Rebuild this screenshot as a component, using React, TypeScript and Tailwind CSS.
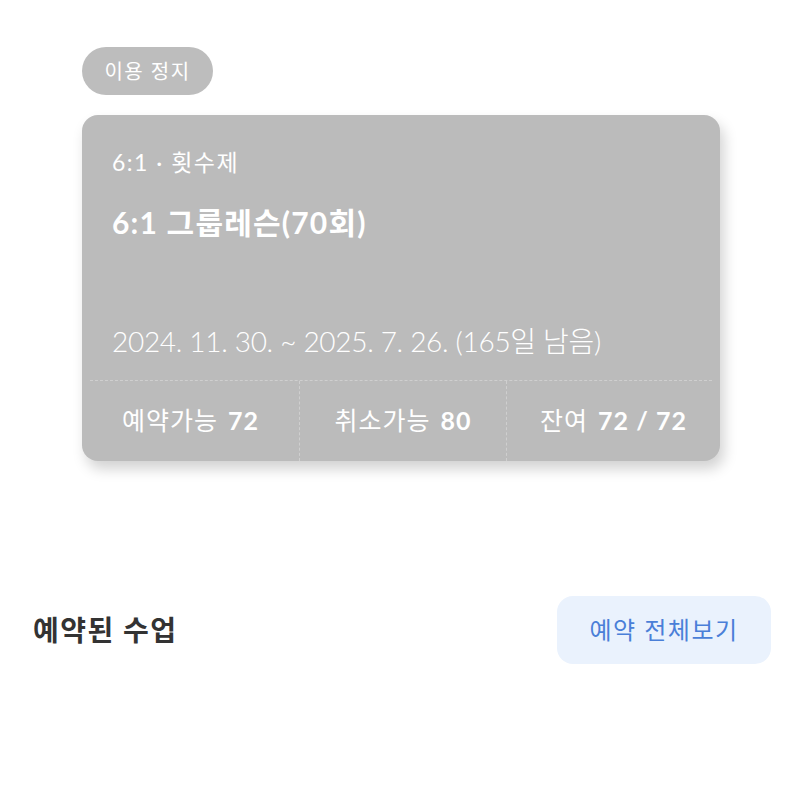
import React from "react";

export default function App() {
  return (
    <div
      className="w-[800px] h-[800px] bg-white relative overflow-hidden"
      style={{ fontFamily: "Lato, 'Noto Sans CJK KR', sans-serif" }}
    >
      <div className="pt-[47px] pl-[82px] pr-[80px]">
        <div className="inline-flex items-center justify-center h-[48px] w-[131px] rounded-full bg-[#bdbdbd] text-white text-[20px] tracking-[1.5px]">
          이용 정지
        </div>
        <div className="mt-[20px] w-[638px] h-[346px] rounded-[16px] bg-[#bbbbbb] shadow-[4px_8px_14px_rgba(0,0,0,0.18)] flex flex-col">
          <div className="px-[30px] pt-[30px] flex-1 flex flex-col text-white">
            <div className="text-[23px] leading-[34px] tracking-[1.5px]">6:1 · 횟수제</div>
            <div className="mt-[24px] text-[30px] font-bold leading-[38px] tracking-[1.2px]">6:1 그룹레슨(70회)</div>
            <div className="mt-auto mb-[21px] text-[28px] font-light leading-[36px] tracking-[-0.3px]">
              2024. 11. 30. ~ 2025. 7. 26. (165일 남음)
            </div>
          </div>
          <div className="mx-[8px] border-t border-dashed border-[#cfcfcf]" />
          <div className="h-[80px] flex text-white text-[25px] tracking-[1px]">
            <div className="w-[218px] flex items-center justify-center border-r border-dashed border-[#cfcfcf]">
              <span>예약가능</span>
              <span className="ml-[10px] font-bold">72</span>
            </div>
            <div className="w-[207px] flex items-center justify-center border-r border-dashed border-[#cfcfcf]">
              <span>취소가능</span>
              <span className="ml-[10px] font-bold">80</span>
            </div>
            <div className="flex-1 flex items-center justify-center">
              <span>잔여</span>
              <span className="ml-[10px] font-bold">72 / 72</span>
            </div>
          </div>
        </div>
      </div>
      <div className="mt-[135px] pl-[33px] pr-[29px] flex items-center justify-between">
        <div className="text-[28px] font-bold text-[#333333] tracking-[1.5px]">예약된 수업</div>
        <div className="w-[214px] h-[68px] rounded-[16px] bg-[#eaf2fd] flex items-center justify-center text-[24px] text-[#4a7fd8] tracking-[1.5px]">
          예약 전체보기
        </div>
      </div>
    </div>
  );
}
